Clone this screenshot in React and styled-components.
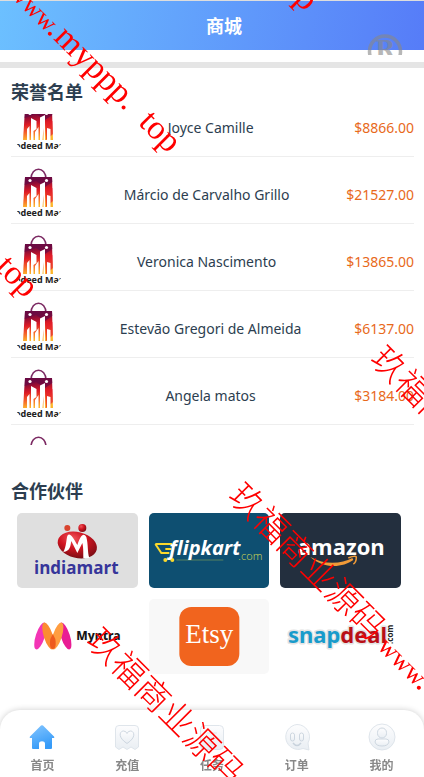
import React from 'react';
import styled, { createGlobalStyle } from 'styled-components';

const winners = [
  { name: 'Joyce Camille', amount: '$8866.00' },
  { name: 'Márcio de Carvalho Grillo', amount: '$21527.00' },
  { name: 'Veronica Nascimento', amount: '$13865.00' },
  { name: 'Estevão Gregori de Almeida', amount: '$6137.00' },
  { name: 'Angela matos', amount: '$3184.00' }
];

const BagLogo = () => (
  <svg viewBox="0 0 56 56" width="56" height="56" aria-hidden="true">
    <defs>
      <linearGradient id="bag" x1="0" y1="0" x2="0.15" y2="1">
        <stop offset="0" stopColor="#6d0c43" />
        <stop offset="0.25" stopColor="#8d0c36" />
        <stop offset="0.5" stopColor="#dd1b26" />
        <stop offset="0.75" stopColor="#f4622a" />
        <stop offset="1" stopColor="#fdb52a" />
      </linearGradient>
    </defs>
    <path d="M20 13C20 0 35 0 35 13" fill="none" stroke="#7c2a63" strokeWidth="1.6" />
    <path d="M14 11H41L42 41H12Z" fill="url(#bag)" />
    <path d="M14 11H41L41.300 16L34 21L25 15L13.600 19Z" fill="#650a45" opacity="0.7" />
    <path d="M35 24L41.500 22L42 35L35 41Z" fill="#e3152b" opacity="0.6" />
    <circle cx="19" cy="14.500" r="1.600" fill="#fff" />
    <circle cx="35.500" cy="14.500" r="1.600" fill="#fff" />
    <path d="M16 41V30L18.500 27V41ZM20 41V19L25.500 22V30L22.500 32V41ZM24 41V33L27.500 28V41ZM29 41V18.500L34 16V41H32.500V29L31.500 41ZM36 41V29L39.500 30V41Z" fill="#fff" />
    <text x="28" y="50" textAnchor="middle" fontSize="9" fontWeight="700" fill="#222">Indeed Mart</text>
  </svg>
);

const IndiamartLogo = () => (
  <Logo viewBox="0 0 120 75" role="img" aria-label="indiamart">
    <defs>
      <radialGradient id="ball" cx="0.35" cy="0.3" r="0.8">
        <stop offset="0" stopColor="#f0555a" />
        <stop offset="0.45" stopColor="#cf1420" />
        <stop offset="1" stopColor="#6d0b12" />
      </radialGradient>
    </defs>
    <circle cx="50" cy="15" r="3" fill="#d9442f" />
    <circle cx="65" cy="15" r="4" fill="url(#ball)" />
    <ellipse cx="60" cy="32" rx="20" ry="13" transform="rotate(14 60 32)" fill="url(#ball)" />
    <path d="M46 39C49 34 49 26 50 23C52 19 55 23 60 32C63 23 66 19 69 24C71 31 70 39 72 45L66 45C66 38 66 34 65 30L60 40L54 28C53 33 53 38 46 39Z" fill="#fff" />
    <text x="59" y="61" textAnchor="middle" fontFamily="Open Sans, sans-serif" fontSize="17" fontWeight="700" fill="#36359a">indiamart</text>
  </Logo>
);

const FlipkartLogo = () => (
  <Logo viewBox="0 0 120 75" role="img" aria-label="flipkart.com">
    <path d="M6 31H23M6 31L12 40H20M16 36H22" fill="none" stroke="#fbd92c" strokeWidth="2" />
    <circle cx="16" cy="47" r="2" fill="#fbd92c" />
    <circle cx="23" cy="47" r="2" fill="#fbd92c" />
    <path d="M27 47H74" stroke="#b9c84a" strokeWidth="0.7" opacity="0.6" />
    <text x="20" y="42" fontFamily="Open Sans, sans-serif" fontSize="20" fontStyle="italic" fontWeight="700" fill="#fff">flipkart</text>
    <text x="89" y="47" fontFamily="Open Sans, sans-serif" fontSize="11" fontWeight="300" fill="#d3da55">.com</text>
  </Logo>
);

const AmazonLogo = () => (
  <Logo viewBox="0 0 120 75" role="img" aria-label="amazon">
    <text x="61" y="42" textAnchor="middle" fontFamily="Open Sans, sans-serif" fontSize="22" fontWeight="700" fill="#fff">amazon</text>
    <path d="M30 44C43 56 62 55 73 47L72 45C61 51 44 52 30 44Z" fill="#f19b38" />
    <path d="M68 45C72 43 76 43 76 44C76 48 75 50 73 51" fill="none" stroke="#f19b38" strokeWidth="1.500" />
  </Logo>
);

const MyntraLogo = () => (
  <Logo viewBox="0 0 120 75" role="img" aria-label="Myntra">
    <g opacity="0.95">
      <ellipse cx="23" cy="37" rx="4.500" ry="14" transform="rotate(18 23 37)" fill="#f32bb2" />
      <ellipse cx="48" cy="37" rx="4.500" ry="14" transform="rotate(-18 48 37)" fill="#e8118f" />
      <ellipse cx="31" cy="37" rx="4.500" ry="14" transform="rotate(-18 31 37)" fill="#fb8627" />
      <ellipse cx="40" cy="37" rx="4.500" ry="14" transform="rotate(18 40 37)" fill="#ff9836" />
      <path d="M33 40L35.500 35L38 40C39 46 38 50 35.500 50C33 50 32 46 33 40Z" fill="#ee5213" />
    </g>
    <text x="59" y="41" fontFamily="Noto Sans, sans-serif" fontSize="12" fontWeight="800" fill="#161616">Myntra</text>
  </Logo>
);

const EtsyLogo = () => (
  <Logo viewBox="0 0 120 75" role="img" aria-label="Etsy">
    <rect x="30" y="8" width="60" height="59" rx="12" fill="#f1641e" />
    <text x="60" y="44" textAnchor="middle" fontFamily="Liberation Serif, serif" fontSize="27" fill="#fff">Etsy</text>
  </Logo>
);

const SnapdealLogo = () => (
  <Logo viewBox="0 0 120 75" role="img" aria-label="snapdeal.com">
    <g stroke="#e4e4e4" strokeWidth="3" paintOrder="stroke" strokeLinejoin="round" fontFamily="Noto Sans, sans-serif" fontSize="22" fontWeight="700">
      <text x="60" y="44" textAnchor="end" fill="#189bcb">snap</text>
      <text x="60" y="44" fill="#b90f17">deal</text>
    </g>
    <text transform="translate(113 45) rotate(-90)" fontFamily="Noto Sans, sans-serif" fontSize="8" fontWeight="700" fill="#222">.com</text>
  </Logo>
);

const partners = [
  { id: 'indiamart', color: '#dfdfdf', logo: IndiamartLogo },
  { id: 'flipkart', color: '#0e4f71', logo: FlipkartLogo },
  { id: 'amazon', color: '#232f3e', logo: AmazonLogo },
  { id: 'myntra', color: '#fff', logo: MyntraLogo },
  { id: 'etsy', color: '#f8f8f8', logo: EtsyLogo },
  { id: 'snapdeal', color: '#fff', logo: SnapdealLogo }
];

const HomeIcon = () => (
  <svg viewBox="0 0 28 28" width="28" height="28" aria-hidden="true">
    <defs>
      <linearGradient id="house" x1="0" y1="0" x2="0.4" y2="1">
        <stop offset="0" stopColor="#85c6ff" />
        <stop offset="1" stopColor="#369bf8" />
      </linearGradient>
    </defs>
    <path d="M13 2.600Q14 1.700 15 2.600L26 13.500Q27 15 25 15H24V25Q24 26 23 26H17V20.500C17 17.500 11 17.500 11 20.500V26H5Q4 26 4 25V15H3Q1 15 2 13.500Z" fill="url(#house)" />
  </svg>
);

const PaleIcon = ({ children }) => (
  <svg viewBox="0 0 28 28" width="28" height="28" fill="url(#pale)" stroke="#dbe2e9" strokeWidth="0.9" aria-hidden="true">
    <defs>
      <linearGradient id="pale" x1="0" y1="0" x2="0" y2="1">
        <stop offset="0" stopColor="#fdfdfe" />
        <stop offset="1" stopColor="#e9eef3" />
      </linearGradient>
    </defs>
    {children}
  </svg>
);

const RechargeIcon = () => (
  <PaleIcon>
    <path d="M2.500 6Q2.500 2.500 6 2.500H22Q25.500 2.500 25.500 6V24L22 26.500L18 24L14 26.500L10 24L6 26.500L2.500 24Z" />
    <path d="M14 20.500C4 14 7 8 10.500 8Q13 8 14 10.500Q15 8 17.500 8C21 8 24 14 14 20.500Z" stroke="#c8d2dc" />
  </PaleIcon>
);

const TaskIcon = () => (
  <PaleIcon>
    <rect x="2.500" y="2.500" width="23" height="24" rx="4" />
    <path d="M9 10H19M9 15H19M9 20H15" />
  </PaleIcon>
);

const OrderIcon = () => (
  <PaleIcon>
    <path d="M14 1.500A12.500 12.500 0 1 0 20 25.500L26 27L25 20A12.500 12.500 0 0 0 14 1.500Z" />
    <rect x="7.500" y="10" width="4" height="8" rx="2" stroke="#c8d2dc" />
    <rect x="16.500" y="10" width="4" height="8" rx="2" stroke="#c8d2dc" />
    <path d="M10 20Q14 25 18 20" fill="none" stroke="#c8d2dc" strokeWidth="1.500" />
  </PaleIcon>
);

const MineIcon = () => (
  <PaleIcon>
    <circle cx="14" cy="14" r="13" />
    <rect x="9.500" y="5" width="9" height="10" rx="4.500" stroke="#c8d2dc" />
    <path d="M7 19Q7 16 10 16H18Q21 16 21 19Q20 23 14 23Q8 23 7 19Z" stroke="#c8d2dc" />
  </PaleIcon>
);

const tabs = [
  { label: '首页', icon: HomeIcon },
  { label: '充值', icon: RechargeIcon },
  { label: '任务', icon: TaskIcon },
  { label: '订单', icon: OrderIcon },
  { label: '我的', icon: MineIcon }
];

// start of each diagonal line and the words of it that are in view
const marks = [
  { x: 223, y: 494, name: true, www: true },
  { x: 81, y: 639, name: true },
  { x: 365, y: 357, name: true },
  { x: -146, y: -160, www: true, site: true, top: true },
  { x: -289, y: -15, top: true },
  { x: -9, y: -302, top: true }
];

const Watermark = () => (
  <Overlay aria-hidden="true">
    {marks.map(({ x, y, name, www, site, top }) => (
      <g key={x} transform={`translate(${x} ${y}) rotate(45)`}>
        {name && <text x="5" fontSize="34" fontWeight="300">玖福商业源码</text>}
        {www && <text x="217" fontSize="26">www</text>}
        {www && <text x="271" fontSize="34">.</text>}
        {site && <text x="281" fontSize="34">myppp.</text>}
        {top && <text x="401" fontSize="34">top</text>}
      </g>
    ))}
  </Overlay>
);

const App = () => (
  <>
    <GlobalStyle />
    <Header>
      <h1>商城</h1>
      <Stamp viewBox="0 0 36 22" aria-hidden="true">
        <circle cx="18" cy="18.500" r="15.500" fill="none" stroke="#888" strokeWidth="3.500" />
        <text x="18" y="25" textAnchor="middle" fontFamily="DejaVu Serif, serif" fontSize="24" fontWeight="700" fill="#888">R</text>
      </Stamp>
    </Header>
    <Divider />
    <Main>
      <section>
        <Title>荣誉名单</Title>
        <Board>
          <Track>
            {winners.map(({ name, amount }) => (
              <Row key={name}>
                <Avatar><BagLogo /></Avatar>
                <span>{name}</span>
                <Amount>{amount}</Amount>
              </Row>
            ))}
            <Row>
              <Avatar><BagLogo /></Avatar>
            </Row>
          </Track>
        </Board>
      </section>
      <section>
        <Title>合作伙伴</Title>
        <Partners>
          {partners.map(({ id, color, logo: LogoImage }) => (
            <Partner key={id} $color={color}><LogoImage /></Partner>
          ))}
        </Partners>
      </section>
    </Main>
    <TabBar>
      {tabs.map(({ label, icon: Icon }) => (
        <Tab key={label} href="#">
          <Icon />
          {label}
        </Tab>
      ))}
    </TabBar>
    <Watermark />
  </>
);

const GlobalStyle = createGlobalStyle`
  * {
    box-sizing: border-box;
  }
  body {
    margin: 0;
    background: #fff;
    color: #2c3e50;
    font-family: 'Noto Sans', 'Noto Sans CJK SC', sans-serif;
    font-size: 14px;
  }
`;

const Header = styled.header`
  position: relative;
  display: flex;
  align-items: center;
  justify-content: center;
  height: 50px;
  padding-left: 24px;
  border-top: 1px solid #ddd;
  background: linear-gradient(100deg, #6cc0ff, #567cf8);
  & h1 {
    margin: 0;
    color: #fff;
    font-size: 18px;
    line-height: 24px;
  }
`;

const Stamp = styled.svg`
  position: absolute;
  top: 32px;
  right: 21px;
  width: 36px;
  height: 22px;
  opacity: 0.6;
`;

const Divider = styled.div`
  height: 6px;
  margin-top: 12px;
  background: #e5e5e5;
`;

const Main = styled.main`
  padding: 11px 10px 80px 11px;
`;

const Title = styled.h2`
  margin: 0;
  font-size: 18px;
  line-height: 26px;
`;

const Board = styled.div`
  height: 331px;
  margin: 9px 0 33px;
  overflow: hidden;
`;

const Track = styled.ul`
  margin: -24px 0 0;
  padding: 0;
  list-style: none;
`;

const Row = styled.li`
  display: flex;
  align-items: center;
  justify-content: space-between;
  height: 67px;
  padding-top: 8px;
  border-bottom: 1px solid #eee;
`;

const Avatar = styled.div`
  width: 56px;
  height: 56px;
  border-radius: 50%;
  overflow: hidden;
`;

const Amount = styled.span`
  color: #e8691b;
`;

const Partners = styled.div`
  display: grid;
  grid-template-columns: repeat(3, 1fr);
  gap: 11px;
  padding: 9px 13px 0 6px;
`;

const Partner = styled.div`
  height: 75px;
  border-radius: 5px;
  background: ${({ $color }) => $color};
`;

const Logo = styled.svg`
  display: block;
  width: 100%;
  height: 100%;
`;

const TabBar = styled.nav`
  position: fixed;
  right: 0;
  bottom: 0;
  left: 0;
  display: flex;
  height: 67px;
  padding-top: 13px;
  border-radius: 20px 20px 0 0;
  background: #fff;
  box-shadow: 0 0 6px rgba(0, 0, 0, 0.2);
`;

const Tab = styled.a`
  display: flex;
  flex: 1;
  flex-direction: column;
  align-items: center;
  gap: 6px;
  color: #888;
  font-size: 12px;
  font-weight: 700;
  line-height: 18px;
  text-decoration: none;
`;

const Overlay = styled.svg`
  position: fixed;
  inset: 0;
  width: 100%;
  height: 100%;
  fill: #f00;
  font-family: 'Liberation Serif', 'Noto Sans CJK SC', serif;
  pointer-events: none;
`;

export default App;
